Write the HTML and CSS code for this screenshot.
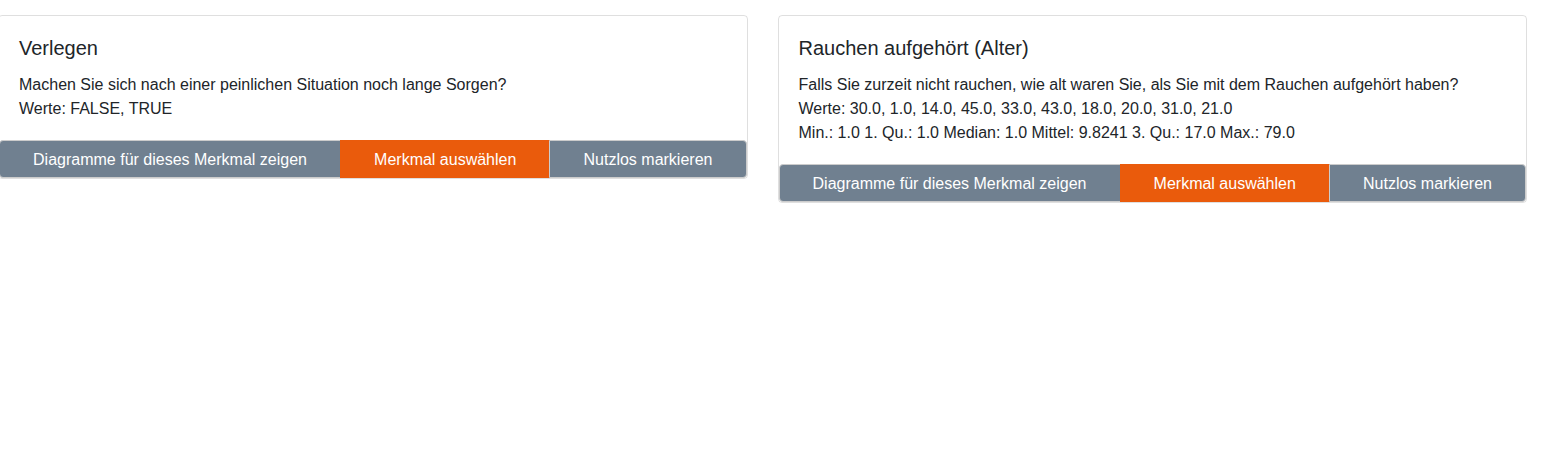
FILE: index.html
```html
<!DOCTYPE html>
<html lang="de">
<head>
<meta charset="utf-8">
<title>Merkmale</title>
<link rel="stylesheet" href="styles.css">
</head>
<body>
<main class="card-deck">
  <article class="card">
    <div class="card-body">
      <h5 class="card-title">Verlegen</h5>
      <p class="card-text">Machen Sie sich nach einer peinlichen Situation noch lange Sorgen?<br>Werte: FALSE, TRUE</p>
    </div>
    <div class="btn-group">
      <button type="button" class="btn">Diagramme für dieses Merkmal zeigen</button>
      <button type="button" class="btn btn-select">Merkmal auswählen</button>
      <button type="button" class="btn">Nutzlos markieren</button>
    </div>
  </article>
  <article class="card">
    <div class="card-body">
      <h5 class="card-title">Rauchen aufgehört (Alter)</h5>
      <p class="card-text">Falls Sie zurzeit nicht rauchen, wie alt waren Sie, als Sie mit dem Rauchen aufgehört haben?<br>Werte: 30.0, 1.0, 14.0, 45.0, 33.0, 43.0, 18.0, 20.0, 31.0, 21.0<br>Min.: 1.0 1. Qu.: 1.0 Median: 1.0 Mittel: 9.8241 3. Qu.: 17.0 Max.: 79.0</p>
    </div>
    <div class="btn-group">
      <button type="button" class="btn">Diagramme für dieses Merkmal zeigen</button>
      <button type="button" class="btn btn-select">Merkmal auswählen</button>
      <button type="button" class="btn">Nutzlos markieren</button>
    </div>
  </article>
</main>
</body>
</html>
```
FILE: styles.css
```css
*, *::before, *::after { box-sizing: border-box; }
body {
  margin: 0;
  background: #fff;
  color: #212529;
  font: 16px/24px Arial, "Liberation Sans", sans-serif;
  overflow-x: hidden;
}
.card-deck {
  display: grid;
  grid-template-columns: 1fr 1fr;
  align-items: start;
  gap: 30px;
  margin: 15px 19px 0 -2px;
}
.card {
  display: flex;
  flex-direction: column;
  min-width: 0;
  border: 1px solid rgba(0, 0, 0, .125);
  border-radius: 4px;
}
.card-body { padding: 20px 20px 19px; }
.card-title {
  margin: 0 0 13px;
  font-size: 20px;
  font-weight: 500;
  line-height: 24px;
}
.card-text { margin: 0; }
.btn-group { display: flex; }
.btn {
  flex: 1 1 auto;
  padding: 7px 12px 5px;
  border: 1px solid #ccc;
  border-radius: 0;
  background: #708090;
  color: #fff;
  font: inherit;
}
.btn + .btn { margin-left: -1px; }
.btn:first-child { border-radius: 4px 0 0 4px; }
.btn:last-child { border-radius: 0 4px 4px 0; }
.btn-select {
  border-color: #ea5b0c;
  background: #ea5b0c;
}
```
